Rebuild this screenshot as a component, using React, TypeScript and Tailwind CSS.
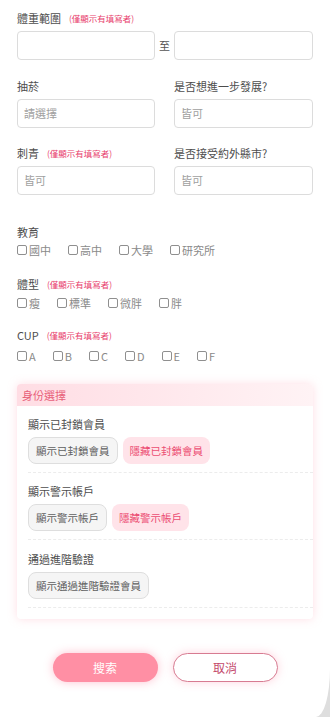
import React from "react";

const FONT = { fontFamily: '"Noto Sans CJK TC", "Noto Sans", sans-serif' };

function Note() {
  return <span className="ml-[8px] text-[8.5px] text-[#e8416d] leading-[16px]">(僅顯示有填寫者)</span>;
}

function Label({ text, note, className = "" }: { text: string; note?: boolean; className?: string }) {
  return (
    <div className={`flex items-center h-[16px] text-[11px] leading-[16px] text-[#4d4d4d] ${className}`}>
      <span>{text}</span>
      {note && <Note />}
    </div>
  );
}

function Input({ placeholder }: { placeholder?: string }) {
  return (
    <div className="h-[29px] w-full rounded-[4px] border border-[#dcdcdc] bg-white flex items-center px-[6px] text-[11px] text-[#a0a0a0]">
      {placeholder}
    </div>
  );
}

function Checks({ items, gap }: { items: string[]; gap: string }) {
  return (
    <div className={`flex items-center h-[16px] ${gap}`}>
      {items.map((t) => (
        <div key={t} className="flex items-center gap-[2px] text-[11px] text-[#8a8a8a] leading-[16px]">
          <span className="inline-block w-[10px] h-[10px] border border-[#8f8f8f] rounded-[2px]" />
          <span>{t}</span>
        </div>
      ))}
    </div>
  );
}

function Chip({ text, active }: { text: string; active?: boolean }) {
  return active ? (
    <div className="h-[27px] px-[7px] rounded-[8px] bg-[#ffe3e9] text-[#ec4d72] text-[10.5px] flex items-center">{text}</div>
  ) : (
    <div className="h-[27px] px-[7px] rounded-[8px] bg-[#f5f5f5] border border-[#dedede] text-[#606060] text-[10.5px] flex items-center">{text}</div>
  );
}

export default function App() {
  return (
    <div className="w-[330px] h-[717px] bg-[#dedede] overflow-hidden" style={FONT}>
      <div className="w-[330px] h-[717px] bg-white rounded-br-[14px_48px] px-[17px] pt-[10px]">
        {/* weight range */}
        <Label text="體重範圍" note />
        <div className="flex items-center mt-[5px]">
          <div className="w-[138px]"><Input /></div>
          <span className="w-[19px] text-center text-[11px] text-[#555]">至</span>
          <div className="w-[139px]"><Input /></div>
        </div>

        <div className="grid grid-cols-[138px_139px] gap-x-[19px] mt-[18px]">
          <div>
            <Label text="抽菸" />
            <div className="mt-[5px]"><Input placeholder="請選擇" /></div>
          </div>
          <div>
            <Label text="是否想進一步發展?" />
            <div className="mt-[5px]"><Input placeholder="皆可" /></div>
          </div>
        </div>

        <div className="grid grid-cols-[138px_139px] gap-x-[19px] mt-[17px]">
          <div>
            <Label text="刺青" note />
            <div className="mt-[5px]"><Input placeholder="皆可" /></div>
          </div>
          <div>
            <Label text="是否接受約外縣市?" />
            <div className="mt-[5px]"><Input placeholder="皆可" /></div>
          </div>
        </div>

        <Label text="教育" className="mt-[29px]" />
        <div className="mt-[2px]">
          <Checks items={["國中", "高中", "大學", "研究所"]} gap="gap-[17px]" />
        </div>

        <Label text="體型" note className="mt-[18px]" />
        <div className="mt-[3px]">
          <Checks items={["瘦", "標準", "微胖", "胖"]} gap="gap-[17px]" />
        </div>

        <Label text="CUP" note className="mt-[16px]" />
        <div className="mt-[5px]">
          <Checks items={["A", "B", "C", "D", "E", "F"]} gap="gap-[17px]" />
        </div>

        {/* identity card */}
        <div className="mt-[20px] rounded-[4px] bg-white shadow-[0_0_10px_rgba(255,160,180,0.35)] overflow-hidden">
          <div className="h-[22px] flex items-center px-[5px] bg-gradient-to-r from-[#ffdde4] to-[#fff3f5] text-[11px] text-[#e8607a]">身份選擇</div>
          <div className="pl-[11px]">
            <div className="pt-[10px] pb-[8px] border-b border-dashed border-[#ececec]">
              <Label text="顯示已封鎖會員" />
              <div className="flex gap-[5px] mt-[5px]">
                <Chip text="顯示已封鎖會員" />
                <Chip text="隱藏已封鎖會員" active />
              </div>
            </div>
            <div className="pt-[10px] pb-[8px] border-b border-dashed border-[#ececec]">
              <Label text="顯示警示帳戶" />
              <div className="flex gap-[5px] mt-[5px]">
                <Chip text="顯示警示帳戶" />
                <Chip text="隱藏警示帳戶" active />
              </div>
            </div>
            <div className="pt-[11px] pb-[8px] border-b border-dashed border-[#ececec]">
              <Label text="通過進階驗證" />
              <div className="flex gap-[5px] mt-[5px]">
                <Chip text="顯示通過進階驗證會員" />
              </div>
            </div>
          </div>
          <div className="h-[11px]" />
        </div>

        <div className="flex justify-center gap-[15px] mt-[34px]">
          <button className="w-[105px] h-[29px] rounded-full bg-[#ff8fa4] text-white text-[12px] shadow-[0_0_10px_rgba(255,120,150,0.45)]">搜索</button>
          <button className="w-[105px] h-[29px] rounded-full bg-white border border-[#d77b91] text-[#c44a6c] text-[12px] shadow-[0_0_10px_rgba(255,150,175,0.4)]">取消</button>
        </div>
      </div>
    </div>
  );
}
